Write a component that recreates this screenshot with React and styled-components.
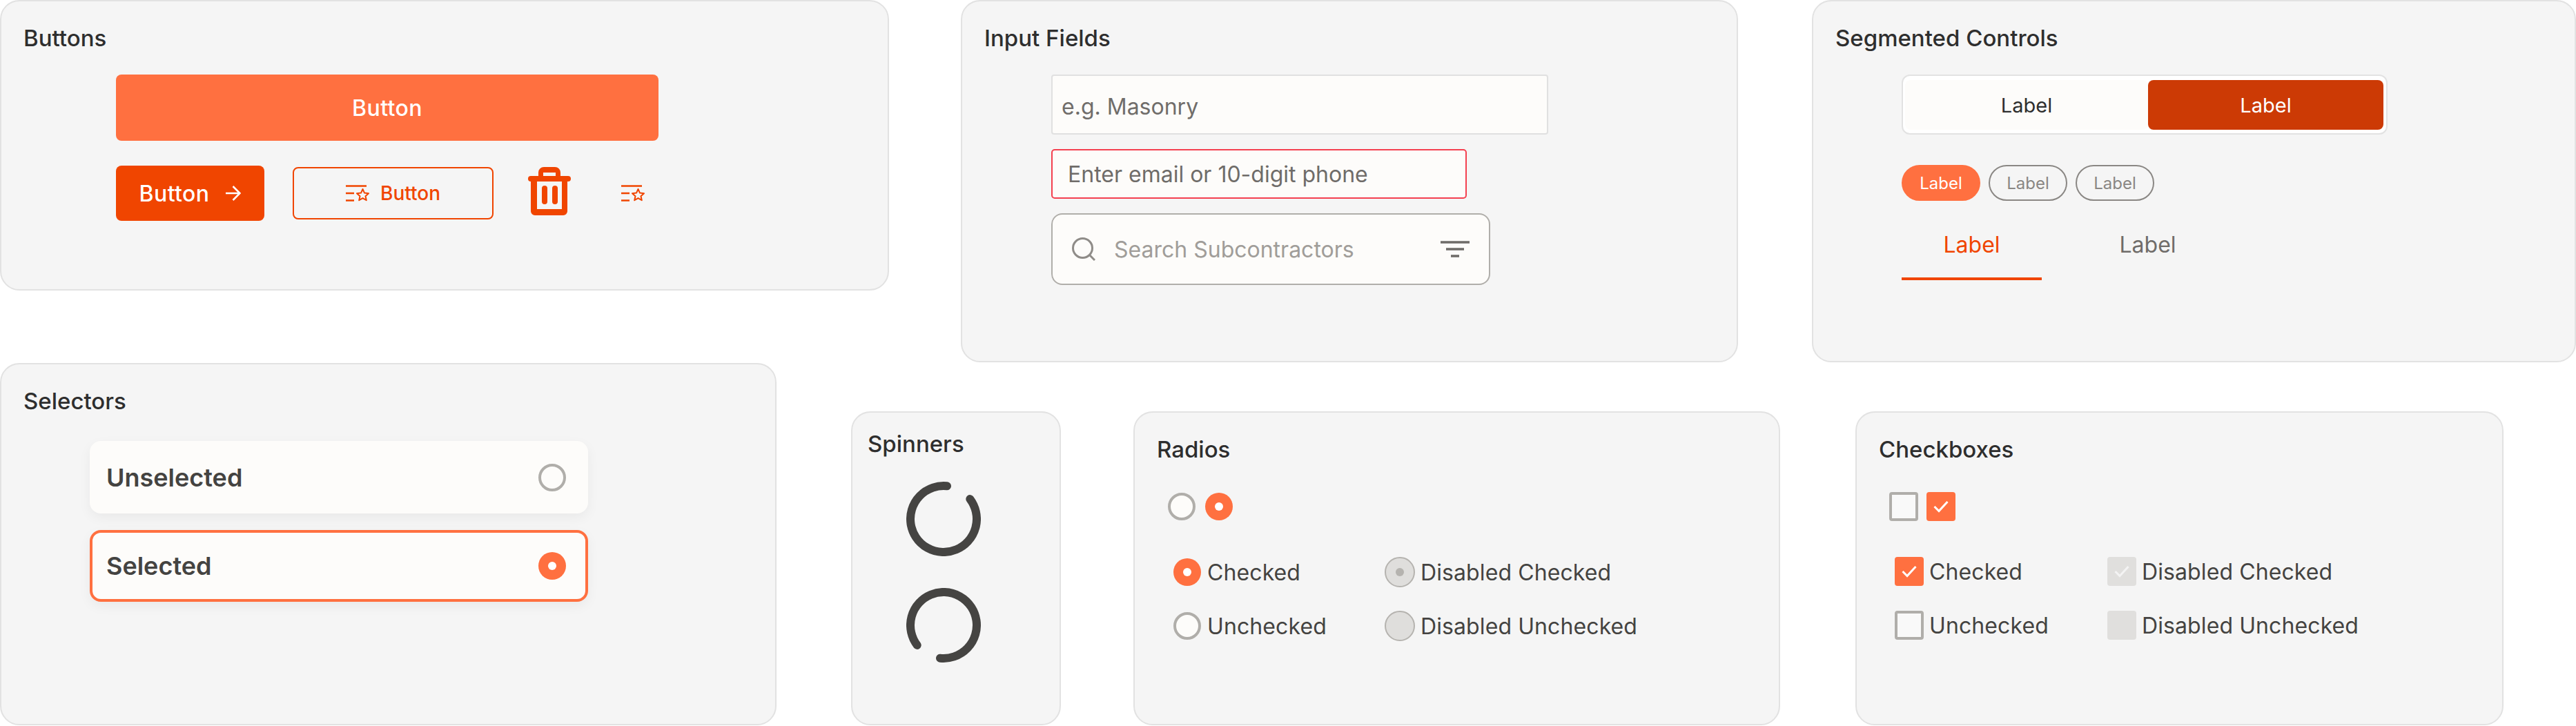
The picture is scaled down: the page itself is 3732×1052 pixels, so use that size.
import React from "react";
import styled, { createGlobalStyle } from "styled-components";

const GlobalStyle = createGlobalStyle`
  * {
    box-sizing: border-box;
  }
  body {
    margin: 0;
    background: #ffffff;
    font-family: "Inter", "Liberation Sans", sans-serif;
    overflow: hidden;
  }
`;

const Page = styled.div`
  width: 3732px;
  height: 1052px;
  display: flex;
  flex-direction: column;
`;

const CardRow = styled.div`
  display: flex;
  align-items: ${(p) => (p.$bottom ? "flex-end" : "flex-start")};
  height: ${(p) => (p.$bottom ? 526 : 525)}px;
`;

const Card = styled.section`
  width: ${(p) => p.$w}px;
  height: ${(p) => p.$h}px;
  margin-left: ${(p) => p.$ml || 0}px;
  padding: 33px 0 0 31px;
  background: #f5f5f5;
  border: 2px solid #e2e2e2;
  border-radius: 28px;
  flex-shrink: 0;
`;

const SpinnerCard = styled(Card)`
  padding: 25px 0 0 21px;
`;

const Title = styled.h2`
  margin: 0;
  padding-left: 1px;
  font-size: 33px;
  line-height: 40px;
  font-weight: 500;
  color: #2e2e2e;
`;

const Body = styled.div`
  display: flex;
  flex-direction: column;
  margin: ${(p) => p.$mt}px 0 0 ${(p) => p.$ml}px;
  gap: ${(p) => p.$gap || 0}px;
`;

const WideButton = styled.button`
  width: 786px;
  height: 96px;
  border: 0;
  border-radius: 8px;
  background: #ff7040;
  color: #ffffff;
  font: 500 32px "Inter", sans-serif;
  letter-spacing: 0.4px;
`;

const ButtonRow = styled.div`
  display: flex;
  align-items: center;
  height: 80px;
`;

const SolidButton = styled.button`
  width: 215px;
  height: 80px;
  border: 0;
  border-radius: 8px;
  background: #f04500;
  color: #ffffff;
  font: 500 32px "Inter", sans-serif;
  letter-spacing: 0.4px;
  display: flex;
  align-items: center;
  justify-content: center;
  gap: 24px;
`;

const OutlineButton = styled.button`
  width: 291px;
  height: 76px;
  margin-left: 41px;
  border: 2px solid #f04500;
  border-radius: 8px;
  background: transparent;
  color: #f04500;
  font: 500 28px "Inter", sans-serif;
  display: flex;
  align-items: center;
  justify-content: center;
  gap: 16px;
`;

const TrashIcon = styled.svg`
  width: 62px;
  height: 70px;
  margin: -6px 0 0 50px;
  fill: #f04500;
`;

const StarListSvg = styled.svg`
  width: 34px;
  height: 24px;
  margin-left: ${(p) => p.$ml || 0}px;
  fill: none;
  stroke: #f04500;
  stroke-width: 2.6;
`;

const FieldBase = styled.div`
  display: flex;
  align-items: center;
  font-size: 32px;
  font-weight: 400;
  white-space: nowrap;
`;

const TextField = styled(FieldBase)`
  width: 720px;
  height: 87px;
  padding: 6px 0 0 13px;
  background: #fdfcfa;
  border: 2px solid #e0e0e0;
  border-radius: 4px;
  color: #706d6a;
`;

const ErrorField = styled(FieldBase)`
  width: 602px;
  height: 72px;
  padding: 0 0 0 22px;
  background: #fdfcfa;
  border: 2px solid #f4404f;
  border-radius: 5px;
  color: #6f6c69;
`;

const SearchField = styled(FieldBase)`
  width: 636px;
  height: 104px;
  padding: 0 28px 0 28px;
  background: #fdfcfa;
  border: 2px solid #b0aeaa;
  border-radius: 16px;
  color: #a09d99;
`;

const SearchText = styled.span`
  margin-left: 27px;
  flex: 1;
`;

const Segmented = styled.div`
  display: grid;
  grid-template-columns: 352px 341px;
  width: 704px;
  height: 87px;
  padding: 6px 4px 5px 3px;
  background: #ffffff;
  border: 2px solid #e2e2e2;
  border-radius: 12px;
`;

const Segment = styled.div`
  display: flex;
  align-items: center;
  justify-content: center;
  font-size: 29px;
  font-weight: 400;
  border-radius: 8px;
  background: ${(p) => (p.$active ? "#cc3a05" : "#fdfcfa")};
  color: ${(p) => (p.$active ? "#ffffff" : "#2e2e2e")};
`;

const PillRow = styled.div`
  display: flex;
  gap: 12px;
  margin-top: 44px;
`;

const Pill = styled.div`
  width: 114px;
  height: 52px;
  display: flex;
  align-items: center;
  justify-content: center;
  font-size: 24px;
  border-radius: 26px;
  border: 2px solid ${(p) => (p.$active ? "#ff7040" : "#8a8784")};
  background: ${(p) => (p.$active ? "#ff7040" : "transparent")};
  color: ${(p) => (p.$active ? "#ffffff" : "#8a8784")};
`;

const TabRow = styled.div`
  display: flex;
  gap: 52px;
  margin-top: 40px;
`;

const Tab = styled.div`
  width: 203px;
  height: 75px;
  line-height: 48px;
  text-align: center;
  font-size: 32px;
  border-bottom: 4px solid ${(p) => (p.$active ? "#f04500" : "transparent")};
  color: ${(p) => (p.$active ? "#f04500" : "#6f6c69")};
`;

const SelectRow = styled.div`
  width: 722px;
  height: ${(p) => (p.$selected ? 104 : 105)}px;
  padding: 0 28px 0 20px;
  display: flex;
  align-items: center;
  justify-content: space-between;
  background: #fdfcfa;
  border: 4px solid ${(p) => (p.$selected ? "#ff7040" : "transparent")};
  border-radius: 16px;
  box-shadow: 0 6px 18px rgba(0, 0, 0, 0.05);
  font-size: 36px;
  font-weight: 600;
  color: #444341;
`;

const Radio = styled.span`
  width: ${(p) => (p.$disabled ? 44 : 40)}px;
  height: ${(p) => (p.$disabled ? 44 : 40)}px;
  flex-shrink: 0;
  display: flex;
  align-items: center;
  justify-content: center;
  border-radius: 50%;
  border: ${(p) =>
    p.$disabled
      ? "2px solid #b5b3af"
      : p.$checked
        ? "0"
        : "4px solid #b0aeaa"};
  background: ${(p) =>
    p.$disabled ? "#dfdedc" : p.$checked ? "#ff7040" : "#fdfcfa"};
  &::after {
    content: "";
    display: ${(p) => (p.$checked ? "block" : "none")};
    width: 12px;
    height: 12px;
    border-radius: 50%;
    background: ${(p) => (p.$disabled ? "#b5b3af" : "#ffffff")};
  }
`;

const Check = styled.span`
  width: 42px;
  height: 42px;
  flex-shrink: 0;
  display: flex;
  align-items: center;
  justify-content: center;
  border-radius: 4px;
  border: ${(p) => (p.$boxed ? "4px solid #b0aeaa" : "0")};
  background: ${(p) => p.$fill};
`;

const CheckMark = styled.svg`
  width: 22px;
  height: 18px;
  fill: none;
  stroke: ${(p) => p.$color};
  stroke-width: 3;
`;

const Swatches = styled.div`
  display: flex;
  gap: ${(p) => p.$gap}px;
`;

const OptionGrid = styled.div`
  display: grid;
  grid-template-columns: ${(p) => p.$col}px auto;
  grid-auto-rows: 44px;
  row-gap: 34px;
  margin-top: ${(p) => p.$mt}px;
  margin-left: ${(p) => p.$ml}px;
`;

const Option = styled.label`
  display: flex;
  align-items: center;
  gap: ${(p) => p.$gap}px;
  font-size: 32px;
  letter-spacing: 0.1px;
  color: #444341;
  white-space: nowrap;
`;

const SpinnerSvg = styled.svg`
  width: 108px;
  height: 108px;
  fill: none;
  stroke: #454442;
  stroke-width: 12;
  stroke-linecap: round;
  transform: rotate(${(p) => p.$turn || 0}deg);
`;

function Spinner({ turn }) {
  return (
    <SpinnerSvg viewBox="0 0 108 108" $turn={turn}>
      <path d="M59 6.3A48 48 0 1 0 92.3 25.1" />
    </SpinnerSvg>
  );
}

function StarList({ ml }) {
  return (
    <StarListSvg viewBox="0 0 34 24" $ml={ml}>
      <path d="M0 1.5H30M0 12H12M0 22.5H12" />
      <path
        d="M24.5 6l2.5 5.6 6 .6-4.5 4 1.3 6-5.3-3.1-5.3 3.1 1.3-6-4.5-4 6-.6z"
        strokeWidth="2"
        strokeLinejoin="round"
      />
    </StarListSvg>
  );
}

function Arrow() {
  return (
    <svg width="22" height="22" viewBox="0 0 22 22" fill="none" stroke="#fff" strokeWidth="2.6">
      <path d="M0 11H20M10.5 1l10 10-10 10" />
    </svg>
  );
}

function Trash() {
  return (
    <TrashIcon viewBox="0 0 62 70">
      <path fillRule="evenodd" d="M15 13V8a8 8 0 0 1 8-8h16a8 8 0 0 1 8 8v5h-7V8H22v5z" />
      <rect x="0" y="13" width="62" height="8" rx="4" />
      <path fillRule="evenodd" d="M4 20h53v44a6 6 0 0 1-6 6H10a6 6 0 0 1-6-6zM13 21v40h36V21z" />
      <rect x="20" y="27" width="8" height="27" rx="4" />
      <rect x="35" y="27" width="8" height="27" rx="4" />
    </TrashIcon>
  );
}

function SearchIcon() {
  return (
    <svg width="34" height="34" viewBox="0 0 34 34" fill="none" stroke="#8f8c88" strokeWidth="3">
      <circle cx="15.5" cy="15.5" r="14" />
      <path d="M26 26l7 7" />
    </svg>
  );
}

function FilterIcon() {
  return (
    <svg width="42" height="24" viewBox="0 0 42 24" fill="none" stroke="#6e6b68" strokeWidth="3.4">
      <path d="M0 2H42M8 12H34M15 22H27" />
    </svg>
  );
}

function Tick({ color }) {
  return (
    <CheckMark viewBox="0 0 22 18" $color={color}>
      <path d="M1.5 9l6.5 6.5L20.5 2" />
    </CheckMark>
  );
}

export default function App() {
  return (
    <Page>
      <GlobalStyle />
      <CardRow>
        <Card $w={1288} $h={421}>
          <Title>Buttons</Title>
          <Body $mt={33} $ml={135} $gap={36}>
            <WideButton>Button</WideButton>
            <ButtonRow>
              <SolidButton>
                Button <Arrow />
              </SolidButton>
              <OutlineButton>
                <StarList />
                Button
              </OutlineButton>
              <Trash />
              <StarList ml={73} />
            </ButtonRow>
          </Body>
        </Card>

        <Card $w={1126} $h={525} $ml={104}>
          <Title>Input Fields</Title>
          <Body $mt={33} $ml={98} $gap={21}>
            <TextField>e.g. Masonry</TextField>
            <ErrorField>Enter email or 10-digit phone</ErrorField>
            <SearchField>
              <SearchIcon />
              <SearchText>Search Subcontractors</SearchText>
              <FilterIcon />
            </SearchField>
          </Body>
        </Card>

        <Card $w={1107} $h={525} $ml={107}>
          <Title>Segmented Controls</Title>
          <Body $mt={33} $ml={97}>
            <Segmented>
              <Segment>Label</Segment>
              <Segment $active>Label</Segment>
            </Segmented>
            <PillRow>
              <Pill $active>Label</Pill>
              <Pill>Label</Pill>
              <Pill>Label</Pill>
            </PillRow>
            <TabRow>
              <Tab $active>Label</Tab>
              <Tab>Label</Tab>
            </TabRow>
          </Body>
        </Card>
      </CardRow>

      <CardRow $bottom>
        <Card $w={1125} $h={525}>
          <Title>Selectors</Title>
          <Body $mt={38} $ml={97} $gap={24}>
            <SelectRow>
              Unselected
              <Radio />
            </SelectRow>
            <SelectRow $selected>
              Selected
              <Radio $checked />
            </SelectRow>
          </Body>
        </Card>

        <SpinnerCard $w={304} $h={455} $ml={108}>
          <Title>Spinners</Title>
          <Body $mt={35} $ml={57} $gap={46}>
            <Spinner />
            <Spinner turn={180} />
          </Body>
        </SpinnerCard>

        <Card $w={937} $h={455} $ml={105}>
          <Title>Radios</Title>
          <Body $mt={43} $ml={17}>
            <Swatches $gap={14}>
              <Radio />
              <Radio $checked />
            </Swatches>
          </Body>
          <OptionGrid $mt={53} $ml={25} $col={306}>
            <Option $gap={9}>
              <Radio $checked />
              Checked
            </Option>
            <Option $gap={8}>
              <Radio $checked $disabled />
              Disabled Checked
            </Option>
            <Option $gap={9}>
              <Radio />
              Unchecked
            </Option>
            <Option $gap={8}>
              <Radio $disabled />
              Disabled Unchecked
            </Option>
          </OptionGrid>
        </Card>

        <Card $w={939} $h={455} $ml={109}>
          <Title>Checkboxes</Title>
          <Body $mt={42} $ml={16}>
            <Swatches $gap={12}>
              <Check $boxed $fill="#f9f9f9" />
              <Check $fill="#ff7040">
                <Tick color="#ffffff" />
              </Check>
            </Swatches>
          </Body>
          <OptionGrid $mt={51} $ml={24} $col={308}>
            <Option $gap={8}>
              <Check $fill="#ff7040">
                <Tick color="#ffffff" />
              </Check>
              Checked
            </Option>
            <Option $gap={8}>
              <Check $fill="#e0dfdd">
                <Tick color="#f3f3f3" />
              </Check>
              Disabled Checked
            </Option>
            <Option $gap={8}>
              <Check $boxed $fill="#f9f9f9" />
              Unchecked
            </Option>
            <Option $gap={8}>
              <Check $fill="#e0dfdd" />
              Disabled Unchecked
            </Option>
          </OptionGrid>
        </Card>
      </CardRow>
    </Page>
  );
}
